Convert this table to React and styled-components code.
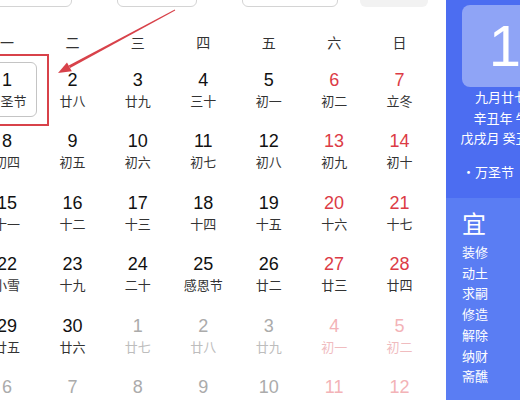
import React from 'react'
import styled, { createGlobalStyle } from 'styled-components'

const GlobalStyle = createGlobalStyle`
    html, body {
        margin: 0;
        padding: 0;
        background: #fff;
    }
    body {
        font-family: "Liberation Sans", "Noto Sans CJK SC", sans-serif;
    }
`
const Page = styled.div`
    width: 520px;
    height: 400px;
    display: flex;
    position: relative;
    overflow: hidden;
    background: #fff;
`
const Main = styled.div`
    flex: 0 0 446px;
    display: flex;
    flex-direction: column;
`
const Toolbar = styled.div`
    display: flex;
    margin: -25px 0 0 -20px;
    height: 32px;
`
const Select = styled.div`
    width: ${p => p.w}px;
    margin-right: ${p => p.gap}px;
    height: 32px;
    box-sizing: border-box;
    border: 1px solid #d4d4d4;
    border-radius: 6px;
    background: #fff;
`
const TodayButton = styled.div`
    width: 68px;
    height: 32px;
    border-radius: 6px;
    background: #f2f2f2;
`
const Grid = styled.div`
    display: grid;
    grid-template-columns: repeat(7, 65.43px);
    margin-left: -25.7px;
`
const WeekHead = styled(Grid)`
    margin-top: 25px;
    height: 20px;
    margin-bottom: 10px;
`
const WeekDay = styled.div`
    text-align: center;
    font-family: "Noto Sans CJK SC", sans-serif;
    font-size: 14px;
    line-height: 20px;
    color: #333;
`
const Days = styled(Grid)`
    row-gap: 6.5px;
`
const Cell = styled.div`
    margin: 0 2.7px;
    height: 55px;
    box-sizing: border-box;
    border: 1.5px solid ${p => (p.selected ? '#c4c4c4' : 'transparent')};
    border-radius: 6px;
    padding-top: 5.5px;
    text-align: center;
`
const Num = styled.div`
    font-size: 18px;
    line-height: 22px;
    color: ${p => (p.other ? (p.weekend ? '#f3b3b7' : '#ababab') : p.weekend ? '#dc3b45' : '#111')};
`
const Lunar = styled.div`
    font-family: "Noto Sans CJK SC", sans-serif;
    font-size: 13px;
    line-height: 20px;
    white-space: nowrap;
    color: ${p => (p.other ? (p.weekend ? '#f0bcbf' : '#bdbdbd') : '#333')};
`
const Side = styled.div`
    flex: 0 0 110px;
    display: flex;
    flex-direction: column;
    color: #fff;
    font-family: "Noto Sans CJK SC", sans-serif;
`
const TodayBlock = styled.div`
    height: 198px;
    background: #4c6df1;
    padding: 5px 0 0 16px;
    box-sizing: border-box;
`
const BigDay = styled.div`
    height: 82px;
    border-radius: 8px;
    background: #8fa4f6;
    font-family: "Liberation Sans", sans-serif;
    font-size: 58px;
    line-height: 82px;
    text-align: center;
    padding-right: 8px;
    box-sizing: border-box;
`
const InfoLine = styled.div`
    margin-left: -16px;
    text-align: center;
    font-size: 13px;
    line-height: 20.5px;
    white-space: nowrap;
    &:first-of-type {
        margin-top: 7px;
    }
`
const Festival = styled.div`
    font-size: 13px;
    line-height: 20px;
    margin-top: 13px;
`
const AdviceBlock = styled.div`
    flex: 1;
    background: #5a7df3;
    padding: 9px 0 0 16px;
`
const AdviceTitle = styled.div`
    font-size: 24px;
    line-height: 32px;
    margin-bottom: 3px;
`
const AdviceItem = styled.div`
    font-size: 13px;
    line-height: 20.7px;
`
const Overlay = styled.svg`
    position: absolute;
    left: 0;
    top: 0;
    pointer-events: none;
`
const MarkBox = styled.div`
    position: absolute;
    left: -2px;
    top: 54px;
    width: 51px;
    height: 72px;
    box-sizing: border-box;
    border: 2px solid #d8424a;
`

const week = ['一', '二', '三', '四', '五', '六', '日']
const days = [
    [1, '万圣节'], [2, '廿八'], [3, '廿九'], [4, '三十'], [5, '初一'], [6, '初二'], [7, '立冬'],
    [8, '初四'], [9, '初五'], [10, '初六'], [11, '初七'], [12, '初八'], [13, '初九'], [14, '初十'],
    [15, '十一'], [16, '十二'], [17, '十三'], [18, '十四'], [19, '十五'], [20, '十六'], [21, '十七'],
    [22, '小雪'], [23, '十九'], [24, '二十'], [25, '感恩节'], [26, '廿二'], [27, '廿三'], [28, '廿四'],
    [29, '廿五'], [30, '廿六'], [1, '廿七', 1], [2, '廿八', 1], [3, '廿九', 1], [4, '初一', 1], [5, '初二', 1],
    [6, '初三', 1], [7, '初四', 1], [8, '初五', 1], [9, '初六', 1], [10, '初七', 1], [11, '初八', 1], [12, '初九', 1]
]
const advice = ['装修', '动土', '求嗣', '修造', '解除', '纳财', '斋醮']

export default function App() {
    return (
        <Page>
            <GlobalStyle />
            <Main>
                <Toolbar>
                    <Select w={92} gap={45} />
                    <Select w={80} gap={45} />
                    <Select w={96} gap={22} />
                    <TodayButton />
                </Toolbar>
                <WeekHead>
                    {week.map(d => <WeekDay key={d}>{d}</WeekDay>)}
                </WeekHead>
                <Days>
                    {days.map(([n, l, other], i) => {
                        const weekend = i % 7 >= 5
                        return (
                            <Cell key={i} selected={i === 0}>
                                <Num weekend={weekend} other={other}>{n}</Num>
                                <Lunar weekend={weekend} other={other}>{l}</Lunar>
                            </Cell>
                        )
                    })}
                </Days>
            </Main>
            <Side>
                <TodayBlock>
                    <BigDay>1</BigDay>
                    <InfoLine>九月廿七</InfoLine>
                    <InfoLine>辛丑年 牛</InfoLine>
                    <InfoLine>戊戌月 癸丑日</InfoLine>
                    <Festival>•万圣节</Festival>
                </TodayBlock>
                <AdviceBlock>
                    <AdviceTitle>宜</AdviceTitle>
                    {advice.map(a => <AdviceItem key={a}>{a}</AdviceItem>)}
                </AdviceBlock>
            </Side>
            <MarkBox />
            <Overlay width="520" height="400" viewBox="0 0 520 400">
                <polygon points="70.1,68.1 175.2,10.4 174.8,9.6 68.7,65.5" fill="#d8424a" />
                <polygon points="58,73 71.8,71.2 67,62.4" fill="#d8424a" />
            </Overlay>
        </Page>
    )
}
